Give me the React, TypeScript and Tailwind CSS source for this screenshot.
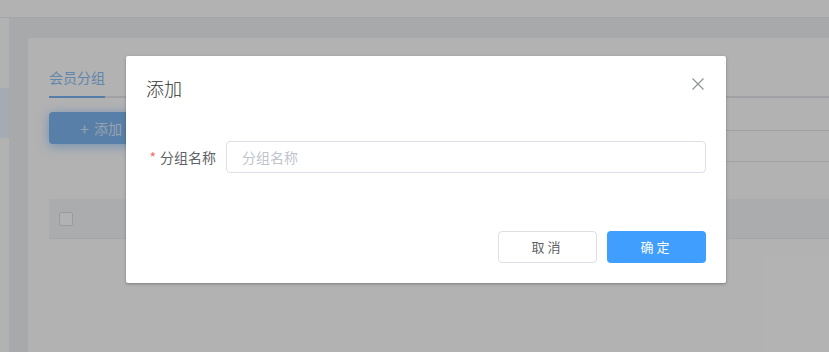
export default function App() {
    return (
        <div className="relative h-[352px] w-[829px] overflow-hidden bg-[#f0f2f5] font-['Noto_Sans_CJK_SC',sans-serif]">
            {/* page behind the dialog */}
            <div className="h-[18px] border-b border-[#ebeef5] bg-white" />
            <div className="flex h-[334px]">
                <aside className="w-[9px] shrink-0 bg-white pt-[70px]">
                    <div className="h-[50px] bg-[#ecf5ff]" />
                </aside>
                <main className="flex-1 pl-[19px] pt-[20px]">
                    <section className="h-full bg-white pl-[21px] pt-[20px]">
                        <div className="flex h-[40px] border-b-2 border-[#e4e7ed]">
                            <div className="-mb-[2px] flex h-[40px] items-center border-b-2 border-[#79b4f0] text-[14px] text-[#8cc0f5]">
                                会员分组
                            </div>
                        </div>
                        <div className="flex items-start">
                            <button className="mt-[14px] flex h-[32px] w-[104px] items-center justify-center gap-[5px] rounded-[4px] bg-[#7fb6f0] text-[14px] text-white/70 shadow-[0_2px_12px_rgba(64,158,255,0.5)]">
                                <span className="text-[16px] leading-none">+</span>
                                添加
                            </button>
                            <div className="ml-[40px] flex-1">
                                <div className="h-[33px] border-b border-[#e4e7ed]" />
                                <div className="h-[31px] border-b border-[#e4e7ed]" />
                            </div>
                        </div>
                        <div className="mt-[37px] flex h-[40px] items-center border-b border-[#ebeef5] bg-[#f5f7fa] pl-[10px]">
                            <span className="h-[14px] w-[14px] rounded-[2px] border border-[#dcdfe6] bg-white" />
                        </div>
                    </section>
                </main>
            </div>

            {/* overlay + dialog */}
            <div className="absolute inset-0 bg-black/30">
                <div className="ml-[126px] mt-[56px] w-[600px] rounded-[2px] bg-white shadow-[0_1px_3px_rgba(0,0,0,0.3)]">
                    <div className="flex items-start justify-between px-[20px] pb-[10px] pt-[20px]">
                        <span className="text-[18px] font-light leading-[24px] text-[#303133]">添加</span>
                        <svg className="mr-[2px] mt-[2px] h-[12px] w-[12px]" viewBox="0 0 12 12" fill="none" stroke="#909399" strokeWidth="1.2">
                            <path d="M0.5 0.5 L11.5 11.5 M11.5 0.5 L0.5 11.5" />
                        </svg>
                    </div>
                    <div className="px-[20px] pb-[26px] pt-[31px]">
                        <div className="flex items-center">
                            <label className="w-[80px] shrink-0 pr-[10px] text-right text-[14px] text-[#606266]">
                                <span className="mr-[4px] text-[#f56c6c]">*</span>
                                分组名称
                            </label>
                            <div className="flex h-[32px] flex-1 items-center rounded-[4px] border border-[#dcdfe6] px-[15px] text-[14px] text-[#c0c4cc]">
                                分组名称
                            </div>
                        </div>
                    </div>
                    <div className="flex justify-end gap-[10px] px-[20px] pb-[20px] pt-[32px]">
                        <button className="h-[32px] w-[99px] rounded-[4px] border border-[#dcdfe6] bg-white text-[13px] tracking-[3px] text-[#606266]">
                            取消
                        </button>
                        <button className="h-[32px] w-[99px] rounded-[4px] bg-[#409eff] text-[13px] tracking-[3px] text-white">
                            确定
                        </button>
                    </div>
                </div>
            </div>
        </div>
    );
}
